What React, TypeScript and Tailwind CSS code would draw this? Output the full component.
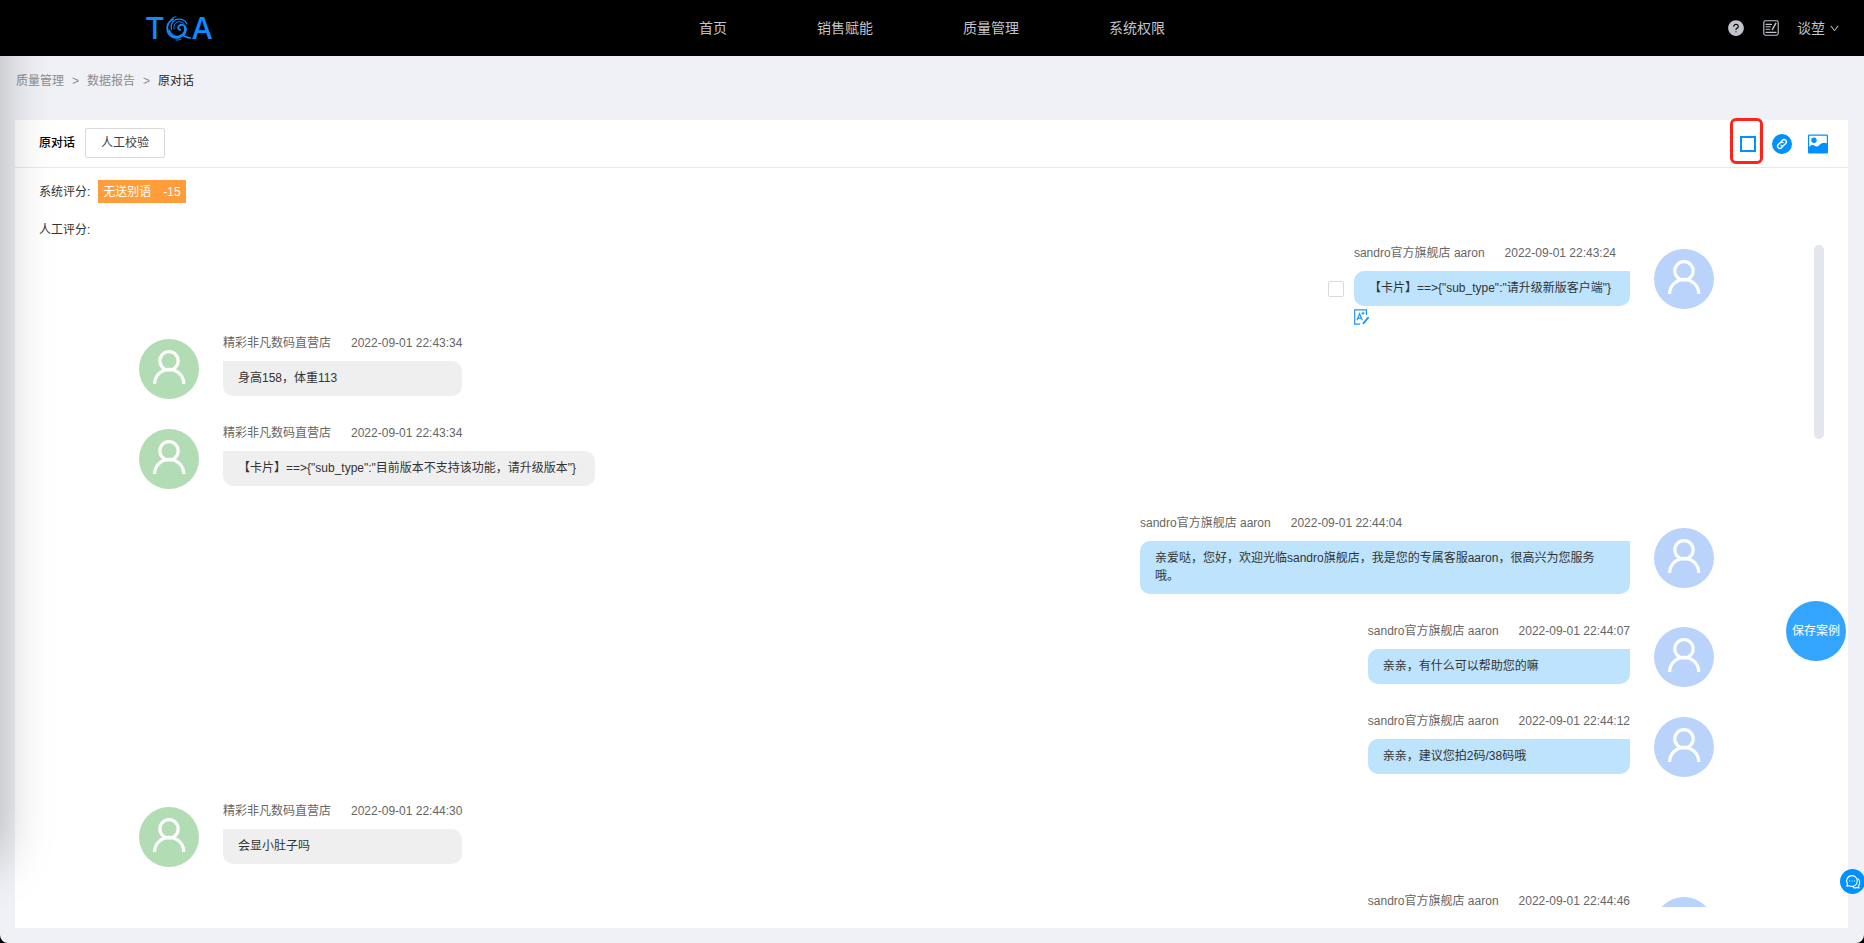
import { useState } from 'react';
import { AiFillQuestionCircle, AiOutlineDown } from 'react-icons/ai';

interface Message {
  id: number;
  from: 'buyer' | 'seller';
  name: string;
  time: string;
  text: string;
  selectable?: boolean;
}

const NAV_ITEMS = ['首页', '销售赋能', '质量管理', '系统权限'];

const BUYER = '精彩非凡数码直营店';
const SELLER = 'sandro官方旗舰店 aaron';

const MESSAGES: Message[] = [
  { id: 1, from: 'seller', name: SELLER, time: '2022-09-01 22:43:24', text: '【卡片】==>{"sub_type":"请升级新版客户端"}', selectable: true },
  { id: 2, from: 'buyer', name: BUYER, time: '2022-09-01 22:43:34', text: '身高158，体重113' },
  { id: 3, from: 'buyer', name: BUYER, time: '2022-09-01 22:43:34', text: '【卡片】==>{"sub_type":"目前版本不支持该功能，请升级版本"}' },
  { id: 4, from: 'seller', name: SELLER, time: '2022-09-01 22:44:04', text: '亲爱哒，您好，欢迎光临sandro旗舰店，我是您的专属客服aaron，很高兴为您服务哦。' },
  { id: 5, from: 'seller', name: SELLER, time: '2022-09-01 22:44:07', text: '亲亲，有什么可以帮助您的嘛' },
  { id: 6, from: 'seller', name: SELLER, time: '2022-09-01 22:44:12', text: '亲亲，建议您拍2码/38码哦' },
  { id: 7, from: 'buyer', name: BUYER, time: '2022-09-01 22:44:30', text: '会显小肚子吗' },
  { id: 8, from: 'seller', name: SELLER, time: '2022-09-01 22:44:46', text: '' },
];

// ── Icons ────────────────────────────────────────────────────────────

function LogoSwirl() {
  return (
    <svg width="27" height="25" viewBox="0 0 27 25" fill="none" stroke="currentColor" strokeLinecap="round">
      <path d="M8 3.2C3.4 5.4 1.4 10 2.6 14.8C3.9 20 9.2 22.8 14.4 21.2C19.4 19.6 22 15.4 20.6 11.4C19.5 8.6 16.3 8 14.2 9.8C12.6 11.4 13.2 13.6 15 13.8" strokeWidth="2" />
      <path d="M4.4 14.4C5.6 19.4 10.6 21.8 15.2 19.8C19 18 20.8 14.4 19.6 11.4" strokeWidth="1.6" />
      <path d="M6.6 13.4C4.8 8 8.4 3.4 13.4 3.2C17.4 3 20.2 4.8 21.8 7.6" strokeWidth="1.2" />
      <path d="M9 12.8C8 8.8 10.6 5.6 14.6 5.8C17 6 18.6 7 19.4 8" strokeWidth="1" />
      <path d="M6.8 2.4C8.2 1.4 9.6 1 11 0.8" strokeWidth="1" />
      <path d="M17.6 18.8C19.6 20.8 21.6 22 25.4 22" strokeWidth="1.6" />
      <path d="M11 24C13 24.2 14.8 23.8 16.2 23" strokeWidth="1" />
    </svg>
  );
}

function NoteIcon() {
  return (
    <svg width="16" height="16" viewBox="0 0 16 16" fill="none" stroke="currentColor" strokeWidth="1.1" strokeLinecap="round">
      <rect x="0.8" y="0.8" width="14.4" height="14.4" rx="1.6" />
      <path d="M3 4.4H8.6M3 6.8H7.4M3 9.2H6.6M3 12.4H13" />
      <path d="M12.8 3.4L9.4 9.4" strokeWidth="1.5" />
    </svg>
  );
}

function LinkCircleIcon() {
  return (
    <svg width="20" height="20" viewBox="0 0 20 20" fill="none">
      <circle cx="10" cy="10" r="10" fill="#0091ff" />
      <g transform="rotate(-45 10 10)" stroke="#fff" strokeWidth="1.4" strokeLinecap="round">
        <path d="M8.8 12.2H7A2.2 2.2 0 0 1 7 7.8H9.6A2.2 2.2 0 0 1 11.6 9.6" />
        <path d="M11.2 7.8H13A2.2 2.2 0 0 1 13 12.2H10.4A2.2 2.2 0 0 1 8.4 10.4" />
      </g>
    </svg>
  );
}

function PictureIcon() {
  return (
    <svg width="20" height="20" viewBox="0 0 20 20">
      <rect x="0.6" y="1.1" width="18.8" height="17.8" rx="0.6" fill="#fff" stroke="#0091ff" strokeWidth="1.2" />
      <circle cx="6" cy="6.2" r="2.7" fill="#0091ff" />
      <path d="M0.6 13.6C2.4 10.8 4.4 10.4 6.4 11.6C8 12.8 9.4 13 11 11.4C13.2 8.8 16 7.8 19.4 9.6V18.9H0.6Z" fill="#0091ff" />
    </svg>
  );
}

function CorrectIcon() {
  return (
    <svg width="16" height="16" viewBox="0 0 16 16" fill="none" stroke="#1a94f5" strokeWidth="1.2">
      <path d="M12.4 6V0.8H0.7V15.2H6" />
      <path d="M3 11.2L5.6 4.8L8.4 11.2M4 9.2H7.4" />
      <path d="M9 2.6V5.8M7.4 4.2H10.6" strokeWidth="1" />
      <path d="M14.6 8.2L9 14.8" strokeWidth="1.8" />
    </svg>
  );
}

function ChatIcon() {
  return (
    <svg width="16" height="16" viewBox="0 0 16 16" fill="none" stroke="#fff" strokeWidth="1.1" strokeLinejoin="round">
      <path d="M7 1.6A5.4 5.4 0 1 1 4.4 11.8L1.8 12.2L2.4 9.9A5.4 5.4 0 0 1 7 1.6Z" />
      <path d="M12.6 4.4C15 6.2 15.4 9.4 13.6 11.6L14 13.9L11.8 13.4C10.4 14 9 14 7.8 13.6" />
      <path d="M4.2 7H5.2M6.7 7H7.7M9.2 7H10.2" />
    </svg>
  );
}

function Avatar({ from }: { from: Message['from'] }) {
  return (
    <div className={`size-[60px] shrink-0 rounded-full ${from === 'buyer' ? 'bg-[#b1dcb4]' : 'bg-[#bad3fb]'}`}>
      <svg width="60" height="60" viewBox="0 0 60 60" fill="none" stroke="#fff" strokeWidth="3.2">
        <circle cx="30" cy="21.8" r="9.2" />
        <path d="M15.6 45A14.4 14.4 0 0 1 44.8 45" />
      </svg>
    </div>
  );
}

// ── Sections ─────────────────────────────────────────────────────────

function TopBar() {
  return (
    <header className="relative z-20 grid h-14 shrink-0 grid-cols-[1fr_auto_1fr] items-center bg-black text-sm text-[#c0c4cc]">
      <a href="#" aria-label="TGA" className="ml-[145px] flex w-fit items-center font-[Inter] text-[30px] leading-none font-medium text-[#0d8bff]">
        <span>T</span>
        <LogoSwirl />
        <span>A</span>
      </a>
      <nav className="flex gap-[90px]">
        {NAV_ITEMS.map((item) => (
          <a key={item} href="#">{item}</a>
        ))}
      </nav>
      <div className="mr-6 flex items-center justify-end gap-[18px]">
        <button aria-label="帮助"><AiFillQuestionCircle size={18} /></button>
        <button aria-label="记录"><NoteIcon /></button>
        <button className="flex items-center gap-1">
          谈堃
          <AiOutlineDown size={11} />
        </button>
      </div>
    </header>
  );
}

function Breadcrumb() {
  return (
    <nav className="flex h-[50px] shrink-0 items-center gap-2 px-4 text-[#8c8c8c]">
      <a href="#">质量管理</a>
      <span>&gt;</span>
      <a href="#">数据报告</a>
      <span>&gt;</span>
      <span className="text-[#262626]">原对话</span>
    </nav>
  );
}

function MessageRow({ message }: { message: Message }) {
  const { from, name, time, text, selectable } = message;
  const isBuyer = from === 'buyer';
  return (
    <li className={`flex shrink-0 items-center gap-6 ${isBuyer ? 'flex-row' : 'flex-row-reverse'}`}>
      <Avatar from={from} />
      <div className="flex gap-2.5">
        {selectable && (
          <input
            type="checkbox"
            aria-label="选择消息"
            className="mb-[17px] size-4 appearance-none self-end rounded-xs border border-[#d9d9d9] bg-white checked:bg-[#0091ff]"
          />
        )}
        <div className="max-w-[490px] pb-2">
          <div className="mb-3 flex gap-5 pt-[3px] leading-none text-[#666]">
            <span>{name}</span>
            <span>{time}</span>
          </div>
          <div
            className={`relative min-h-[35px] rounded-b-[10px] pt-2 pr-[19px] pb-[9px] pl-[15px] text-[#333] ${
              isBuyer ? 'rounded-tr-[10px] bg-[#efefef]' : 'rounded-tl-[10px] bg-[#bde3fd]'
            }`}
          >
            {text}
            {selectable && (
              <button aria-label="纠错" className="absolute top-full left-0 mt-[3px]">
                <CorrectIcon />
              </button>
            )}
          </div>
        </div>
      </div>
    </li>
  );
}

export default function App() {
  const [expanded, setExpanded] = useState(false);

  return (
    <div className="h-screen bg-black font-['Liberation_Sans','Noto_Sans_CJK_SC',sans-serif] text-xs leading-[18px]">
      <div className="relative flex h-full flex-col overflow-hidden rounded-b-lg bg-[#eff1f6]">
        <TopBar />
        {/* collapsed side drawer, only its shadow reaches into the page */}
        <div className="pointer-events-none absolute top-0 right-full z-10 h-[860px] w-50 shadow-[0_0_48px_rgba(0,0,0,0.28)]" />
        <Breadcrumb />

        <main className="mt-3.5 mr-4 mb-[15px] ml-[15px] flex min-h-0 flex-1 flex-col bg-white">
          <div className="flex h-12 shrink-0 items-center border-b border-[#e8e8e8] pr-5 pb-px pl-6">
            <h1 className="font-medium text-black">原对话</h1>
            <button className="ml-2.5 h-[30px] rounded-xs border border-[#d9d9d9] px-[15px] text-[#404040]">人工校验</button>
            <div className="ml-auto flex items-center gap-4 pt-0.5">
              <button
                aria-label="全屏"
                aria-pressed={expanded}
                onClick={() => setExpanded((v) => !v)}
                className="relative size-4 border-2 border-[#0091ff]"
              >
                <span className="absolute -top-5 -left-3 h-[46px] w-[33px] rounded-md border-3 border-[#ff231c]" />
              </button>
              <button aria-label="复制链接"><LinkCircleIcon /></button>
              <button aria-label="保存图片"><PictureIcon /></button>
            </div>
          </div>

          <div className="shrink-0 px-6 pt-3 pb-[3px] text-[#333]">
            <div className="flex h-[23px] items-center gap-2">
              <span>系统评分:</span>
              <span className="flex h-full items-center gap-3 bg-[#ff9d3b] px-[5px] text-white">
                <span>无送别语</span>
                <span>-15</span>
              </span>
            </div>
            <div className="mt-4 flex h-[22px] items-center">人工评分:</div>
          </div>

          <div className="mb-[21px] flex min-h-0 flex-1 px-6">
            <ul className="flex flex-1 flex-col gap-5 overflow-hidden px-[100px]">
              {MESSAGES.map((message) => (
                <MessageRow key={message.id} message={message} />
              ))}
            </ul>
            <div className="mt-px h-[194px] w-2.5 rounded-full bg-[#e3e6ec]" />
          </div>
        </main>

        <button className="absolute right-[18px] bottom-[282px] size-[60px] rounded-full bg-[#34a5ff] text-white">保存案例</button>
        <button aria-label="在线客服" className="absolute -right-px bottom-[49px] flex size-[25px] items-center justify-center rounded-full bg-[#0091ff]">
          <ChatIcon />
        </button>
      </div>
    </div>
  );
}
